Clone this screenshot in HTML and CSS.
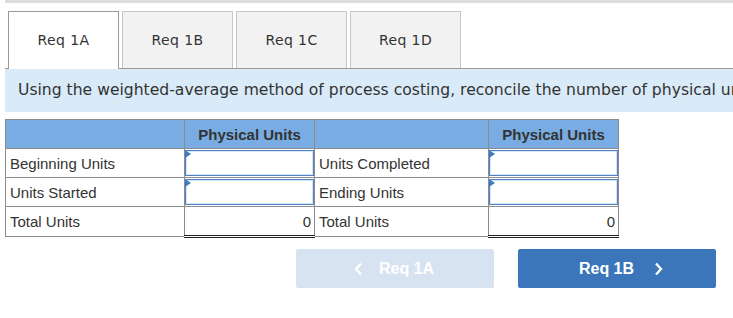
FILE: index.html
```html
<!DOCTYPE html>
<html lang="en">
<head>
    <meta charset="UTF-8">
    <title>Req 1A - Physical Units</title>
    <link rel="stylesheet" href="styles.css">
</head>
<body>
    <div class="page">
        <div class="topbar"></div>

        <!-- tabs -->
        <div class="tabs">
            <div class="tab active">Req 1A</div>
            <div class="tab">Req 1B</div>
            <div class="tab">Req 1C</div>
            <div class="tab">Req 1D</div>
        </div>

        <div class="instructions">
            Using the weighted-average method of process costing, reconcile the number of physical units worked on during the period.
        </div>

        <!-- reconciliation table -->
        <table class="units">
            <colgroup>
                <col class="c-label">
                <col class="c-value">
                <col class="c-label2">
                <col class="c-value">
            </colgroup>
            <tr class="head">
                <th></th>
                <th>Physical Units</th>
                <th></th>
                <th>Physical Units</th>
            </tr>
            <tr>
                <td class="label">Beginning Units</td>
                <td class="entry"><div class="field"></div></td>
                <td class="label">Units Completed</td>
                <td class="entry"><div class="field"></div></td>
            </tr>
            <tr>
                <td class="label">Units Started</td>
                <td class="entry"><div class="field"></div></td>
                <td class="label">Ending Units</td>
                <td class="entry"><div class="field"></div></td>
            </tr>
            <tr class="total">
                <td class="label">Total Units</td>
                <td class="sum">0</td>
                <td class="label">Total Units</td>
                <td class="sum">0</td>
            </tr>
        </table>

        <!-- navigation -->
        <div class="nav">
            <button class="nav-btn prev">
                <svg width="9" height="14" viewBox="0 0 9 14"><polyline points="7,1.5 2,7 7,12.5" fill="none" stroke="#fff" stroke-width="2.4"/></svg>
                <span>Req 1A</span>
            </button>
            <button class="nav-btn next">
                <span>Req 1B</span>
                <svg width="9" height="14" viewBox="0 0 9 14"><polyline points="2,1.5 7,7 2,12.5" fill="none" stroke="#fff" stroke-width="2.4"/></svg>
            </button>
        </div>
    </div>
</body>
</html>
```

FILE: styles.css
```css
/* page */
body {
    margin: 0;
    background-color: #fff;
    overflow: hidden;
}

.page {
    padding-left: 5px;
    width: 728px;
    font-family: 'Liberation Sans', Arial, sans-serif;
    color: #333;
}

.topbar {
    height: 3px;
    background-color: #ddd;
}

/* tabs */
.tabs {
    display: flex;
    gap: 3px;
    margin-top: 8px;
    padding-left: 3px;
    border-bottom: 1px solid #999;
}

.tab {
    width: 109px;
    height: 56px;
    line-height: 56px;
    text-align: center;
    font-family: 'DejaVu Sans', Verdana, sans-serif;
    font-size: 14px;
    letter-spacing: 0.4px;
    color: #333;
    background-color: #f2f2f2;
    border: 1px solid #c6c6c6;
    border-bottom: none;
}

.tab.active {
    background-color: #fff;
    border-color: #999;
    margin-bottom: -1px;
    height: 57px;
}

/* instructions band */
.instructions {
    height: 43px;
    line-height: 43px;
    padding-left: 13px;
    background-color: #d9eaf8;
    font-family: 'DejaVu Sans', Verdana, sans-serif;
    font-size: 15.6px;
    color: #333;
    white-space: nowrap;
    overflow: hidden;
}

/* table */
.units {
    margin-top: 7px;
    border-collapse: collapse;
    width: 613px;
    font-size: 15px;
    table-layout: fixed;
}

.c-label { width: 179px; }
.c-value { width: 130px; }
.c-label2 { width: 174px; }

.units th,
.units td {
    border: 1px solid #8c8c8c;
    padding: 0;
    height: 29px;
    box-sizing: border-box;
}

.units th {
    background-color: #78ace2;
    font-size: 15px;
    font-weight: bold;
    color: #333;
    text-align: center;
}

.units td.label {
    padding-left: 4px;
    color: #333;
}

.units td.entry {
    padding: 0;
}

.field {
    position: relative;
    height: 26px;
    box-sizing: border-box;
    border: 1px solid #4f82c2;
    box-shadow: inset 0 0 0 1px #d6e4f5;
    background-color: #fff;
}

/* little blue marker in the corner */
.field::before {
    content: "";
    position: absolute;
    left: -1px;
    top: -1px;
    border-top: 4px solid transparent;
    border-bottom: 4px solid transparent;
    border-left: 6px solid #3e7ac2;
}

.units td.sum {
    text-align: right;
    padding-right: 3px;
    border-bottom: 3px double #222;
}

.units tr.total td {
    height: 30px;
}

/* nav buttons */
.nav {
    display: flex;
    justify-content: flex-end;
    gap: 24px;
    margin-top: 11px;
    padding-right: 17px;
}

.nav-btn {
    display: flex;
    align-items: center;
    justify-content: center;
    gap: 16px;
    width: 198px;
    height: 39px;
    border: none;
    border-radius: 2px;
    font-family: 'Liberation Sans', Arial, sans-serif;
    font-size: 16px;
    font-weight: bold;
    color: #fff;
    cursor: pointer;
}

.nav-btn.prev {
    background-color: #d7e3f1;
    padding-right: 8px;
}

.nav-btn.next {
    background-color: #3a76b9;
    gap: 20px;
    padding-left: 14px;
}
```
